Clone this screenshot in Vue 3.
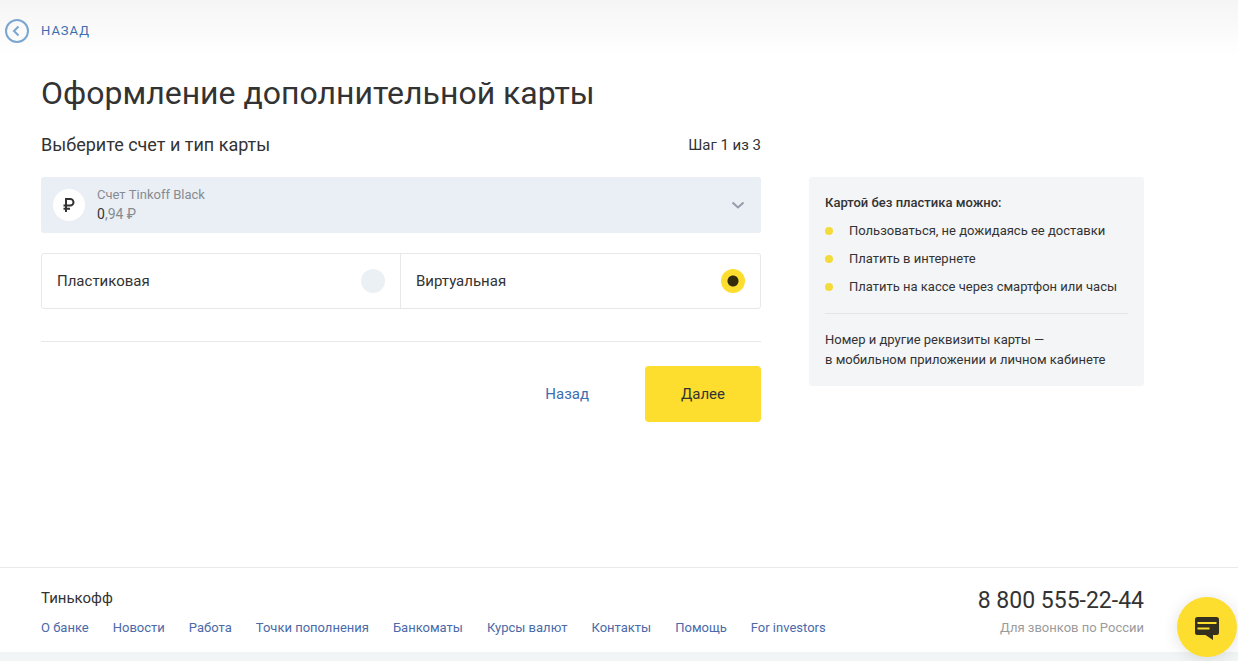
<script setup>
import { ref } from 'vue'

const cardType = ref('virtual')
const account = ref('black')

const cardTypes = [
  { value: 'plastic', label: 'Пластиковая' },
  { value: 'virtual', label: 'Виртуальная' },
]

const benefits = [
  'Пользоваться, не дожидаясь ее доставки',
  'Платить в интернете',
  'Платить на кассе через смартфон или часы',
]

const footerLinks = [
  'О банке',
  'Новости',
  'Работа',
  'Точки пополнения',
  'Банкоматы',
  'Курсы валют',
  'Контакты',
  'Помощь',
  'For investors',
]
</script>

<template>
  <div class="page">
    <header class="topbar">
      <a class="back" href="#">
        <svg class="back-icon" viewBox="0 0 24 24" aria-hidden="true">
          <circle cx="12" cy="12" r="11" />
          <path d="M13.500 7.500 9 12l4.500 4.500" />
        </svg>
        <span>НАЗАД</span>
      </a>
    </header>

    <main class="content">
      <h1>Оформление дополнительной карты</h1>
      <div class="columns">
        <form class="form" @submit.prevent>
          <div class="form-head">
            <h2>Выберите счет и тип карты</h2>
            <span class="step">Шаг 1 из 3</span>
          </div>

          <div class="account">
            <span class="account-icon">
              <svg viewBox="0 0 16 16" aria-hidden="true">
                <path d="M5 15V2h4.2a3.2 3.2 0 0 1 0 6.6H2.5M2.5 11.8H9" />
              </svg>
            </span>
            <span class="account-text">
              <label class="account-name" for="account">Счет Tinkoff Black</label>
              <span class="account-sum"><b>0</b>,94 ₽</span>
            </span>
            <svg class="chevron" viewBox="0 0 14 8" aria-hidden="true">
              <path d="M1.500 1.500 7 6.500l5.500-5" />
            </svg>
            <select id="account" v-model="account" class="account-select">
              <option value="black">Счет Tinkoff Black</option>
            </select>
          </div>

          <div class="types" role="radiogroup" aria-label="Тип карты">
            <label v-for="type in cardTypes" :key="type.value" class="type">
              <span>{{ type.label }}</span>
              <input v-model="cardType" type="radio" name="type" :value="type.value" />
            </label>
          </div>

          <div class="actions">
            <a class="cancel" href="#">Назад</a>
            <button class="next" type="submit">Далее</button>
          </div>
        </form>

        <aside class="info">
          <h3>Картой без пластика можно:</h3>
          <ul>
            <li v-for="item in benefits" :key="item">{{ item }}</li>
          </ul>
          <p>Номер и другие реквизиты карты —<br />в мобильном приложении и личном кабинете</p>
        </aside>
      </div>
    </main>

    <footer class="footer">
      <div>
        <div class="brand">Тинькофф</div>
        <nav class="links">
          <a v-for="link in footerLinks" :key="link" href="#">{{ link }}</a>
        </nav>
      </div>
      <div class="contact">
        <a class="phone" href="tel:88005552244">8 800 555-22-44</a>
        <span class="note">Для звонков по России</span>
      </div>
    </footer>

    <button class="chat" type="button" aria-label="Чат">
      <svg viewBox="0 0 26 26" aria-hidden="true">
        <path class="bubble" d="M3.500 3h19A2.500 2.500 0 0 1 25 5.500v13a2.500 2.500 0 0 1-2.500 2.500H19v5l-7.500-5h-8A2.500 2.500 0 0 1 1 18.500v-13A2.500 2.500 0 0 1 3.500 3z" />
        <path class="lines" d="M3.500 9h19M3.500 14.500h12" />
      </svg>
    </button>
  </div>
</template>

<style>
body {
  margin: 0;
  background: #fff;
}
</style>

<style scoped>
.page {
  box-sizing: border-box;
  display: flex;
  flex-direction: column;
  min-height: 100vh;
  border-bottom: 9px solid #f1f5f5;
  background: linear-gradient(#f5f5f5, #fff 56px);
  color: #333;
  font-family: Roboto, "Liberation Sans", sans-serif;
  font-size: 15px;
  line-height: 20px;
}

a {
  color: #3d6fb0;
  text-decoration: none;
}

h1,
h2,
h3,
ul,
p {
  margin: 0;
  padding: 0;
  font-weight: 400;
}

.topbar {
  display: flex;
  padding: 19px 5px 0;
}

.back {
  display: flex;
  gap: 12px;
  font-size: 13px;
  line-height: 24px;
  letter-spacing: 1px;
}

.back-icon {
  width: 24px;
  height: 24px;
  fill: none;
  stroke: #7ba6d0;
  stroke-width: 2;
}

.content {
  flex: 1;
  padding: 30px 94px 40px 41px;
}

h1 {
  font-size: 32px;
  line-height: 40px;
}

.columns {
  display: grid;
  grid-template-columns: minmax(0, 720fr) minmax(0, 335fr);
  column-gap: 48px;
  align-items: start;
  margin-top: 20px;
}

.form-head {
  display: flex;
  align-items: center;
  justify-content: space-between;
  height: 24px;
}

h2 {
  font-size: 18px;
  line-height: 24px;
}

.account {
  position: relative;
  display: flex;
  align-items: center;
  gap: 12px;
  box-sizing: border-box;
  min-height: 56px;
  margin-top: 20px;
  padding: 0 16px 0 12px;
  border-radius: 3px;
  background: #eaeff6;
}

.account-icon {
  display: flex;
  align-items: center;
  justify-content: center;
  width: 32px;
  height: 32px;
  border-radius: 50%;
  background: #fff;
}

.account-icon svg {
  width: 16px;
  height: 16px;
  fill: none;
  stroke: #333;
  stroke-width: 2;
}

.account-text {
  display: flex;
  flex: 1;
  flex-direction: column;
  color: #868b90;
}

.account-name {
  font-size: 13px;
  line-height: 18px;
}

.account-sum {
  font-size: 14px;
}

.account-sum b {
  color: #333;
  font-weight: 400;
}

.chevron {
  width: 14px;
  height: 8px;
  fill: none;
  stroke: #959ba8;
  stroke-width: 2;
}

.account-select {
  position: absolute;
  inset: 0;
  width: 100%;
  opacity: 0;
  cursor: pointer;
}

.types {
  display: grid;
  grid-template-columns: 1fr 1fr;
  margin-top: 20px;
  border: 1px solid #e7e8ea;
  border-radius: 3px;
}

.type {
  display: flex;
  align-items: center;
  justify-content: space-between;
  height: 54px;
  padding: 0 15px;
  cursor: pointer;
}

.type:first-child {
  border-right: 1px solid #e7e8ea;
}

.type input {
  width: 24px;
  height: 24px;
  margin: 0;
  border-radius: 50%;
  background: #ebf0f5;
  appearance: none;
}

.type input:checked {
  background: radial-gradient(circle, #332b0b 5px, #fddd2d 6px);
}

.actions {
  display: flex;
  align-items: center;
  justify-content: flex-end;
  gap: 56px;
  margin-top: 32px;
  padding-top: 24px;
  border-top: 1px solid #e7e8ea;
}

.next {
  min-width: 116px;
  height: 56px;
  border: 0;
  border-radius: 4px;
  background: #fddd2d;
  color: #333;
  font: inherit;
}

.info {
  margin-top: 44px;
  padding: 16px;
  border-radius: 3px;
  background: #f4f5f7;
  font-size: 13px;
}

h3 {
  font-size: 13px;
  font-weight: 500;
}

ul {
  padding-bottom: 16px;
  border-bottom: 1px solid #e3e5e9;
  list-style: none;
}

li {
  display: flex;
  align-items: center;
  gap: 16px;
  margin-top: 8px;
}

li::before {
  width: 8px;
  height: 8px;
  border-radius: 50%;
  background: #f3db3c;
  content: "";
}

.info p {
  margin-top: 16px;
}

.footer {
  display: flex;
  justify-content: space-between;
  padding: 20px 94px 14px 41px;
  border-top: 1px solid #e7e9eb;
  background: #fff;
}

.links {
  display: flex;
  flex-wrap: wrap;
  gap: 0 24px;
  margin-top: 10px;
  font-size: 13px;
}

.links a {
  color: #4a6aa8;
}

.contact {
  display: flex;
  flex-direction: column;
  text-align: right;
}

.phone {
  color: #333;
  font-size: 23px;
  line-height: 26px;
}

.note {
  margin-top: 4px;
  color: #9b9b9b;
  font-size: 13px;
}

.chat {
  position: fixed;
  right: 1px;
  bottom: 4px;
  display: flex;
  align-items: center;
  justify-content: center;
  width: 60px;
  height: 60px;
  padding: 0;
  border: 0;
  border-radius: 50%;
  background: #fddd2d;
  box-shadow: 0 2px 16px rgba(0, 0, 0, 0.12);
}

.chat svg {
  width: 26px;
  height: 26px;
}

.bubble {
  fill: #33301f;
}

.lines {
  fill: none;
  stroke: #fddd2d;
  stroke-width: 2;
}
</style>
